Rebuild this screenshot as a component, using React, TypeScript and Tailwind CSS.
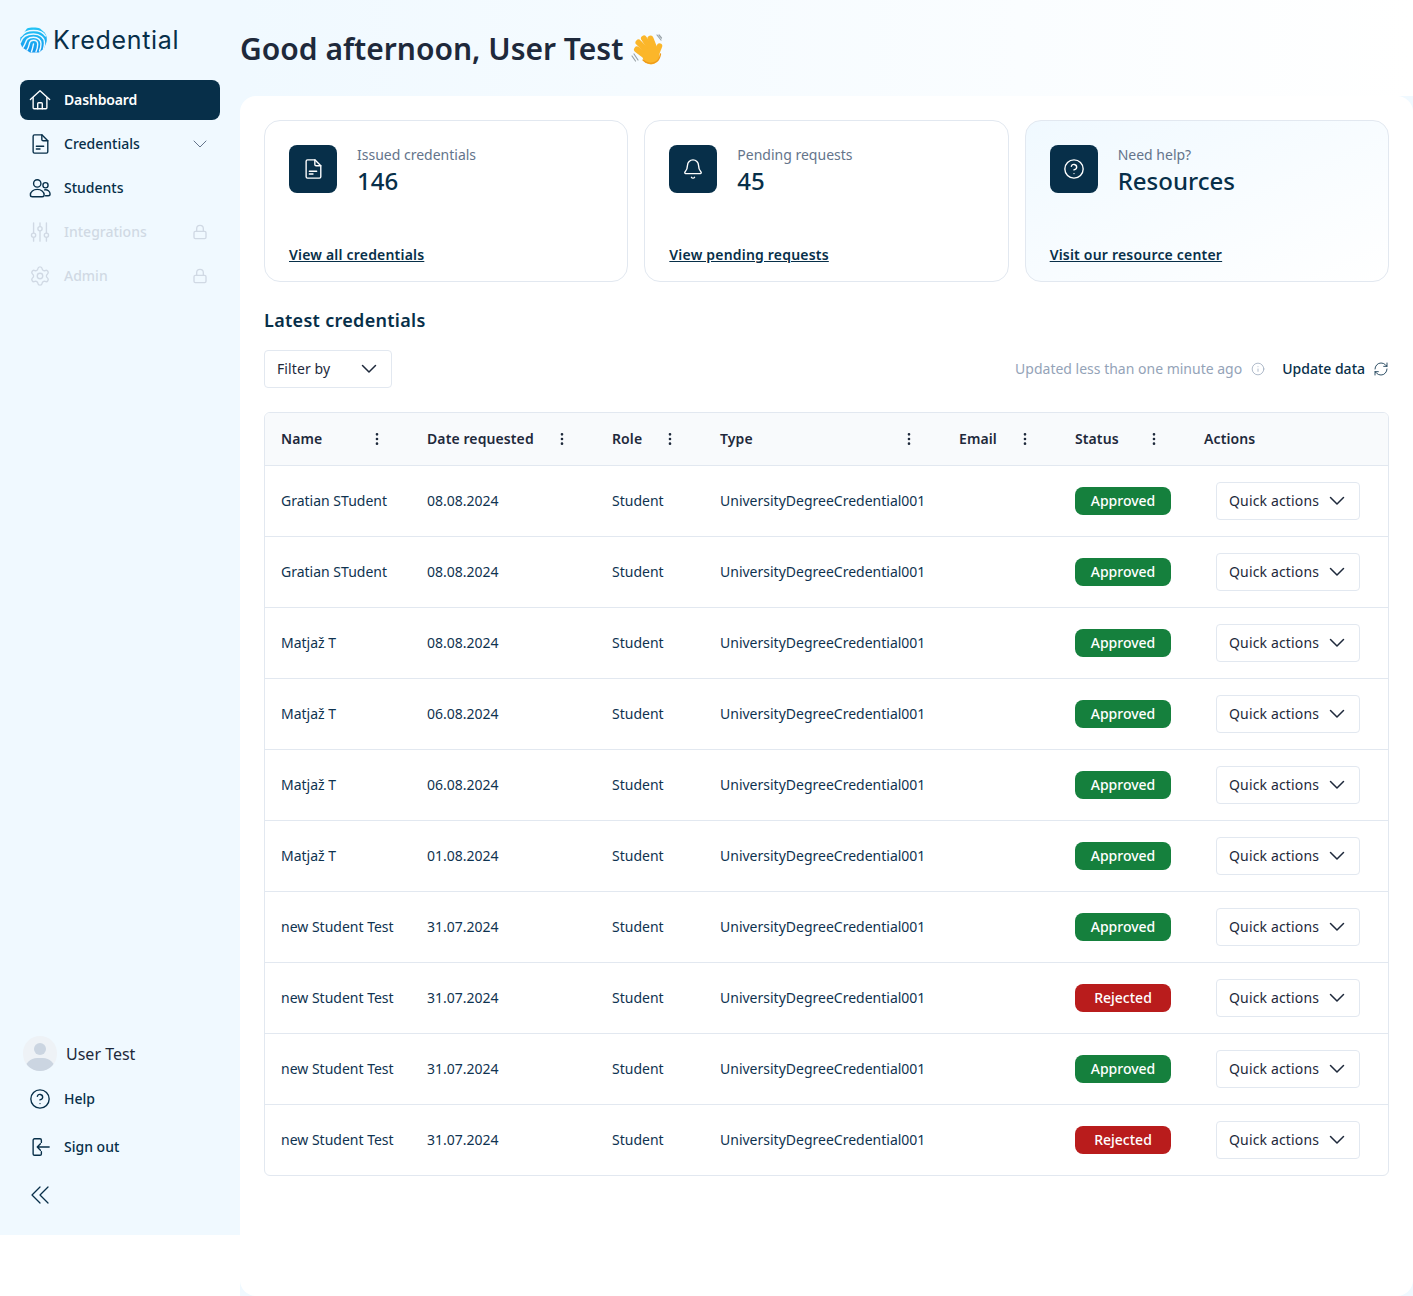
import React from "react";
import { Settings, Lock, CircleHelp, RefreshCw, Info, EllipsisVertical, Bell } from "lucide-react";

type IconProps = { className?: string };
const Ico = ({ className = "", children }: IconProps & { children: React.ReactNode }) => (
  <svg viewBox="0 0 24 24" fill="none" stroke="currentColor" strokeWidth={1.5} strokeLinecap="round" strokeLinejoin="round" className={`shrink-0 ${className}`}>
    {children}
  </svg>
);

const FileIcon = ({ className = "" }: IconProps) => (
  <Ico className={className}>
    <path d="M6 2h8l6.500 6.500V20.500a1.500 1.500 0 0 1-1.500 1.500H6a1.500 1.500 0 0 1-1.500-1.500V3.500A1.500 1.500 0 0 1 6 2Z" />
    <path d="M14 2v5a1.500 1.500 0 0 0 1.500 1.500h5" />
    <path d="M8 14.500h8M8 17.500h4" />
  </Ico>
);

const HomeIcon = ({ className = "" }: IconProps) => (
  <Ico className={className}>
    <path d="M1.500 11.500 12 2l10.500 9.500" />
    <path d="M4.500 9.500V20.500a1 1 0 0 0 1 1h13a1 1 0 0 0 1-1V9.500" />
    <path d="M9.500 21.500V16a1 1 0 0 1 1-1h3a1 1 0 0 1 1 1v5.500" />
  </Ico>
);

const PeopleIcon = ({ className = "" }: IconProps) => (
  <Ico className={className}>
    <circle cx="9" cy="7" r="4" />
    <path d="M1.500 19.500c0-3.500 3.300-6 7.500-6s7.500 2.500 7.500 6c0 1.300-1 2-2.200 2H3.700c-1.200 0-2.200-.7-2.200-2Z" />
    <circle cx="18" cy="9" r="2.800" />
    <path d="M17 14c3.300-.5 6 1.500 6 4.500 0 1.200-.9 2-2 2h-3" />
  </Ico>
);

const SlidersIcon = ({ className = "" }: IconProps) => (
  <Ico className={className}>
    <path d="M5 2v11M5 18v4M12 2v4M12 11v11M19 2v11M19 18v4" />
    <circle cx="5" cy="15.500" r="2.300" />
    <circle cx="12" cy="8.500" r="2.300" />
    <circle cx="19" cy="15.500" r="2.300" />
  </Ico>
);

const SignOutIcon = ({ className = "" }: IconProps) => (
  <Ico className={className}>
    <path d="M13.500 7V4.500A1.500 1.500 0 0 0 12 3H6a1.500 1.500 0 0 0-1.500 1.500v15A1.500 1.500 0 0 0 6 21h6a1.500 1.500 0 0 0 1.500-1.500V17" />
    <path d="M22 12H9M12.500 8.500 9 12l3.500 3.500" />
  </Ico>
);

const DoubleLeft = ({ className = "" }: IconProps) => (
  <svg viewBox="0 0 18 18" fill="none" stroke="currentColor" strokeWidth={1.25} strokeLinecap="round" strokeLinejoin="round" className={`shrink-0 ${className}`}>
    <path d="M9 1 1 9l8 8M17 1 9 9l8 8" />
  </svg>
);

const Chevron = () => (
  <svg viewBox="0 0 16 10" fill="none" stroke="currentColor" strokeWidth={1.5} strokeLinecap="round" strokeLinejoin="round" className="h-[10px] w-4 shrink-0">
    <path d="M1.500 1.500 8 8l6.500-6.500" />
  </svg>
);

const Logo = () => (
  <svg viewBox="0 0 27 26" fill="none" strokeLinecap="round" className="h-[26px] w-[27px] shrink-0">
    <defs>
      <linearGradient id="lg" x1="0" y1="0" x2="0" y2="1">
        <stop offset="0" stopColor="#22c3f5" />
        <stop offset="1" stopColor="#1598ee" />
      </linearGradient>
    </defs>
    <path d="M7 1.500C10 .2 17 .2 20 1.500L24.500 5.500C26.500 8 27.300 11 26.500 15L24 21.500 19 25.500H10L3 21C.5 18 -.3 14 .5 10.500Z" fill="url(#lg)" />
    <g stroke="#f0f9ff" strokeWidth="1.400">
      <path d="M1.500 9C3.500 5.500 8 3.500 13.500 3.500S23.500 5.500 25.500 9" />
      <path d="M.5 15.500C2 10 7 7 13.500 7 20 7 24.500 10.500 24.500 16c0 2-.4 4-1 6" />
      <path d="M3 20.500C5.500 17.500 5.500 14 7.300 12.300c1.600-1.500 3.800-2 6.200-2 4.300 0 7.500 2.700 7.500 6.500 0 2.700-.5 5-1.500 7.200" />
      <path d="M7 23C8.800 20.500 9 17.500 9.800 15.300c.6-1.400 2-2 3.700-2 2.500 0 4.200 1.500 4.200 4 0 2.800-.6 5.300-1.700 7.500" />
      <path d="M11.500 24.800c1-2.500 1.300-5 2-7.800" />
    </g>
  </svg>
);

const Wave = () => (
  <svg viewBox="6 6 33 33" fill="none" strokeLinecap="round" className="h-[33px] w-[33px] shrink-0">
    <g stroke="#9aa3a8" strokeWidth="1.200">
      <path d="M9 27l4 6M7 29l3.500 5M32 8l4 5M34 8l2.500 3" />
    </g>
    <g stroke="#fbb62a" strokeWidth="6">
      <path d="M12 22.500 22 30" />
      <path d="M13.500 15.500 24 26" />
      <path d="M19 11.500 27 24" />
      <path d="M25.500 11.500 30 23" />
      <path d="M34.500 19 31 28" strokeWidth="5.500" />
    </g>
    <circle cx="26" cy="29" r="8.500" fill="#fbb62a" />
    <path d="M18 33c3 3.500 9 4.500 13.500 1.500 3-2 3.500-5 4-7.500" stroke="#ee9a1a" strokeWidth="1.300" />
  </svg>
);

const NavItem = ({ icon, label, active, disabled, right }: { icon: React.ReactNode; label: string; active?: boolean; disabled?: boolean; right?: React.ReactNode }) => (
  <div className={`flex h-10 items-center rounded-lg pl-[10px] pr-[10px] text-sm ${active ? "bg-[#072f49] font-semibold tracking-[-0.15px] text-white" : disabled ? "font-medium text-[#d0d9e4]" : "font-medium text-[#072f49]"}`}>
    <span className="flex w-5 shrink-0 items-center justify-center">{icon}</span>
    <span className="ml-[14px] flex-1">{label}</span>
    {right}
  </div>
);

const StatCard = ({ icon, label, value, link, tinted }: { icon: React.ReactNode; label: string; value: string; link: string; tinted?: boolean }) => (
  <div className={`flex h-[162px] flex-col justify-between rounded-2xl border border-[#e2e8f0] px-6 pb-4 pt-6 ${tinted ? "bg-gradient-to-br from-[#f0f9ff] to-white" : "bg-white"}`}>
    <div className="flex gap-5">
      <div className="flex h-12 w-12 items-center justify-center rounded-lg bg-[#072f49] text-white">{icon}</div>
      <div>
        <div className="text-sm leading-5 text-[#64748b]">{label}</div>
        <div className="text-2xl font-medium leading-8 text-[#072f49]">{value}</div>
      </div>
    </div>
    <a className="text-sm font-semibold leading-5 tracking-[0.2px] text-[#072f49] underline">{link}</a>
  </div>
);

const rows: [string, string, string][] = [
  ["Gratian STudent", "08.08.2024", "Approved"],
  ["Gratian STudent", "08.08.2024", "Approved"],
  ["Matjaž T", "08.08.2024", "Approved"],
  ["Matjaž T", "06.08.2024", "Approved"],
  ["Matjaž T", "06.08.2024", "Approved"],
  ["Matjaž T", "01.08.2024", "Approved"],
  ["new Student Test", "31.07.2024", "Approved"],
  ["new Student Test", "31.07.2024", "Rejected"],
  ["new Student Test", "31.07.2024", "Approved"],
  ["new Student Test", "31.07.2024", "Rejected"],
];

const Head = ({ label, dots = true }: { label: string; dots?: boolean }) => (
  <th className="p-0 text-left align-middle">
    <div className="flex items-center justify-between pl-4 pr-[26px]">
      <span className="text-sm font-semibold tracking-[0.1px] text-[#1e293b]">{label}</span>
      {dots && <EllipsisVertical className="h-4 w-4 text-[#1e293b]" strokeWidth={2} />}
    </div>
  </th>
);

const SmallChevron = () => (
  <span className="mr-[3px] text-[#64748b]">
    <svg viewBox="0 0 14 8" fill="none" stroke="currentColor" strokeWidth={1} strokeLinecap="round" strokeLinejoin="round" className="h-2 w-[14px]">
      <path d="M1 1l6 6 6-6" />
    </svg>
  </span>
);

export default function App() {
  return (
    <div className="flex h-[1296px] w-full bg-white font-['Noto_Sans',sans-serif]">
      <aside className="flex h-[1235px] w-60 shrink-0 flex-col justify-between bg-[#f0f9ff] px-5 pb-5 pt-6">
        <div>
          <div className="flex h-8 items-center gap-[6px]">
            <Logo />
            <span className="font-['Inter',sans-serif] text-[25px] font-normal leading-8 tracking-[0.7px] text-[#072f49]">Kredential</span>
          </div>
          <nav className="mt-6 flex flex-col gap-1">
            <NavItem active label="Dashboard" icon={<HomeIcon className="h-[22px] w-[22px]" />} />
            <NavItem label="Credentials" icon={<FileIcon className="h-[22px] w-[22px]" />} right={<SmallChevron />} />
            <NavItem label="Students" icon={<PeopleIcon className="h-[22px] w-[22px]" />} />
            <NavItem disabled label="Integrations" icon={<SlidersIcon className="h-[22px] w-[22px]" />} right={<Lock className="mr-[2px] h-4 w-4" strokeWidth={2} />} />
            <NavItem disabled label="Admin" icon={<Settings className="h-[22px] w-[22px] shrink-0" strokeWidth={1.5} />} right={<Lock className="mr-[2px] h-4 w-4" strokeWidth={2} />} />
          </nav>
        </div>
        <div className="flex flex-col">
          <div className="flex items-center gap-[9px] pl-[3px]">
            <div className="relative h-[35px] w-[34px] overflow-hidden rounded-full bg-[#eef2f6]">
              <div className="absolute left-[11px] top-[7px] h-3 w-3 rounded-full bg-[#cbd5e1]" />
              <div className="absolute left-[2px] top-[22px] h-6 w-[30px] rounded-full bg-[#cbd5e1]" />
            </div>
            <span className="text-base text-[#1e293b]">User Test</span>
          </div>
          <div className="mt-2 flex flex-col gap-2">
            <NavItem label="Help" icon={<CircleHelp className="h-[22px] w-[22px] shrink-0" strokeWidth={1.5} />} />
            <NavItem label="Sign out" icon={<SignOutIcon className="h-[22px] w-[22px]" />} />
            <NavItem label="" icon={<DoubleLeft className="h-[18px] w-[18px]" />} />
          </div>
        </div>
      </aside>

      <main className="flex min-w-0 flex-1 flex-col bg-[#f0f9ff]">
        <header className="flex h-24 shrink-0 items-center bg-gradient-to-r from-[#f0f9ff] to-white pt-[2px]">
          <h1 className="flex items-center gap-2 text-3xl font-semibold text-[#1e293b]">
            Good afternoon, User Test <Wave />
          </h1>
        </header>
        <div className="flex-1 rounded-2xl bg-white px-6 pt-6">
          <div className="grid grid-cols-3 gap-4">
            <StatCard label="Issued credentials" value="146" link="View all credentials" icon={<FileIcon className="h-[22px] w-[22px]" />} />
            <StatCard label="Pending requests" value="45" link="View pending requests" icon={<Bell className="h-[22px] w-[22px]" strokeWidth={1.5} />} />
            <StatCard tinted label="Need help?" value="Resources" link="Visit our resource center" icon={<CircleHelp className="h-[22px] w-[22px]" strokeWidth={1.5} />} />
          </div>

          <h2 className="mt-6 text-lg font-semibold leading-7 tracking-[0.3px] text-[#072f49]">Latest credentials</h2>

          <div className="mt-4 flex items-center justify-between">
            <div className="flex h-[38px] w-32 items-center justify-between rounded border border-[#e2e8f0] bg-white pl-3 pr-[14px] text-sm text-[#1e293b]">
              <span className="tracking-[0.1px]">Filter by</span> <Chevron />
            </div>
            <div className="flex items-center text-sm">
              <span className="text-[#94a3b8]">Updated less than one minute ago</span>
              <Info className="ml-[9px] h-[14px] w-[14px] text-[#94a3b8]" strokeWidth={1.25} />
              <span className="ml-[17px] font-medium text-[#072f49]">Update data</span>
              <RefreshCw className="ml-2 h-4 w-4 text-[#072f49]" strokeWidth={1.25} />
            </div>
          </div>

          <div className="mt-6 overflow-hidden rounded-md border border-[#e2e8f0]">
            <table className="w-full table-fixed border-collapse text-sm text-[#0f3350]">
              <colgroup>
                <col className="w-[146px]" />
                <col className="w-[185px]" />
                <col className="w-[108px]" />
                <col className="w-[239px]" />
                <col className="w-[116px]" />
                <col className="w-[129px]" />
                <col />
              </colgroup>
              <thead>
                <tr className="h-[52px] border-b border-[#e2e8f0] bg-[#f8fafc]">
                  <Head label="Name" />
                  <Head label="Date requested" />
                  <Head label="Role" />
                  <Head label="Type" />
                  <Head label="Email" />
                  <Head label="Status" />
                  <Head label="Actions" dots={false} />
                </tr>
              </thead>
              <tbody>
                {rows.map((r, i) => (
                  <tr key={i} className={`h-[71px] ${i < rows.length - 1 ? "border-b border-[#e2e8f0]" : ""}`}>
                    <td className="whitespace-nowrap pl-4">{r[0]}</td>
                    <td className="whitespace-nowrap pl-4">{r[1]}</td>
                    <td className="whitespace-nowrap pl-4">Student</td>
                    <td className="whitespace-nowrap pl-4">UniversityDegreeCredential001</td>
                    <td />
                    <td className="pl-4">
                      <span className={`flex h-7 w-24 items-center justify-center rounded-lg font-medium text-white ${r[2] === "Approved" ? "bg-[#15803d]" : "bg-[#b91c1c]"}`}>{r[2]}</span>
                    </td>
                    <td className="pl-7">
                      <div className="flex h-[38px] w-36 items-center justify-between rounded border border-[#e2e8f0] bg-white pl-3 pr-[14px] text-[#1e293b]">
                        <span className="tracking-[0.15px]">Quick actions</span> <Chevron />
                      </div>
                    </td>
                  </tr>
                ))}
              </tbody>
            </table>
          </div>
        </div>
      </main>
    </div>
  );
}
